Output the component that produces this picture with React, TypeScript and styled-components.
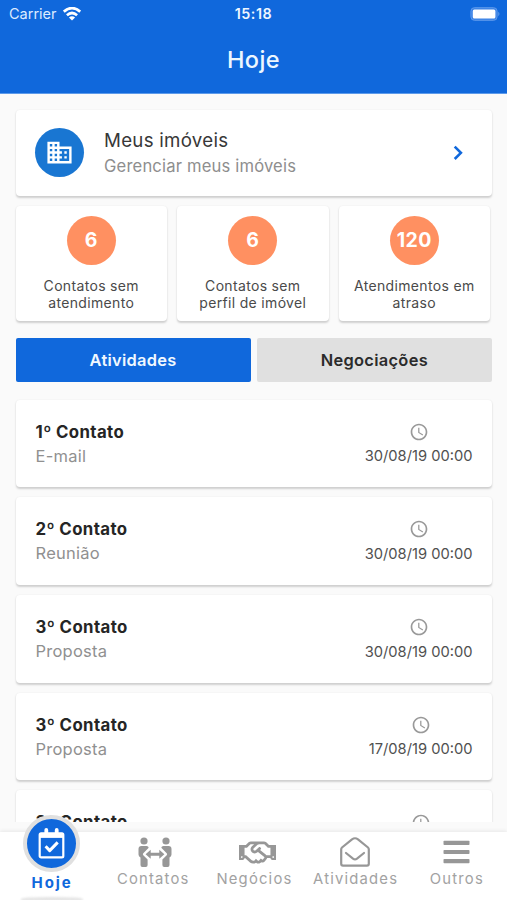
import React from "react";
import styled, { createGlobalStyle } from "styled-components";
import { MdDomain, MdAccessTime } from "react-icons/md";
import { FaRegHandshake } from "react-icons/fa";

const GlobalStyle = createGlobalStyle`
  * { box-sizing: border-box; }
  body { margin: 0; background: #fafafa; font-family: Inter, "Liberation Sans", sans-serif; }
`;

const Screen = styled.div`
  height: 900px;
  display: flex;
  flex-direction: column;
  overflow: hidden;
  background: #fafafa;
`;

const Header = styled.header`
  height: 94px;
  flex: none;
  background: #1068dc;
  border-bottom: 1px solid #5d9aea;
  color: #fff;
`;

const StatusBar = styled.div`
  height: 27px;
  padding: 0 7px 0 7px;
  display: grid;
  grid-template-columns: 1fr auto 1fr;
  align-items: center;
`;

const Carrier = styled.div`
  display: flex;
  align-items: center;
  gap: 6px;
  padding-left: 2px;
  font-size: 14.5px;
  letter-spacing: 0;
  color: #dcebff;
`;

const Clock = styled.div`
  font-size: 14.3px;
  font-weight: 600;
  letter-spacing: 0.55px;
  color: #eef6ff;
`;

const Battery = styled.svg`
  justify-self: end;
`;

const Title = styled.h1`
  margin: 0;
  height: 66px;
  line-height: 66px;
  text-align: center;
  font-size: 23.5px;
  font-weight: 500;
  letter-spacing: 0.45px;
  color: #edf7ff;
`;

const Content = styled.main`
  height: 728px;
  flex: none;
  overflow: hidden;
  padding: 15.5px 15px 0 15.5px;
`;

const Card = styled.section`
  background: #fff;
  border-radius: 4px;
  box-shadow: 0 1.5px 2px rgba(0, 0, 0, 0.17), 0 0 2px rgba(0, 0, 0, 0.04);
`;

const PropertyCard = styled(Card)`
  height: 86px;
  display: flex;
  align-items: center;
  padding: 0 28px 0 19.5px;
`;

const Disc = styled.div<{ $color: string }>`
  width: 49px;
  height: 49px;
  border-radius: 50%;
  display: flex;
  align-items: center;
  justify-content: center;
  background: ${(p) => p.$color};
  color: #fff;
  font-size: 19.5px;
  font-weight: 700;
  letter-spacing: 0.4px;
`;

const PropertyText = styled.div`
  flex: 1;
  margin-left: 20px;
  padding-top: 1px;
`;

const PropertyTitle = styled.div`
  font-size: 18.7px;
  line-height: 25px;
  letter-spacing: 0.27px;
  color: #383838;
`;

const PropertyHint = styled.div`
  padding-top: 1px;
  font-size: 16.6px;
  line-height: 24px;
  letter-spacing: 0.17px;
  color: #8e8e8e;
`;

const Stats = styled.div`
  display: grid;
  grid-template-columns: repeat(3, 151.5px);
  gap: 10px;
  margin-top: 10.5px;
`;

const StatCard = styled(Card)`
  height: 115px;
  padding-top: 9.5px;
  display: flex;
  flex-direction: column;
  align-items: center;
`;

const StatLabel = styled.div`
  margin-top: 12px;
  text-align: center;
  white-space: pre-line;
  font-size: 14px;
  line-height: 17px;
  letter-spacing: 0.33px;
  color: #4a4a4a;
`;

const Tabs = styled.div`
  display: grid;
  grid-template-columns: 1fr 1fr;
  gap: 6px;
  margin-top: 17px;
`;

const Tab = styled.button<{ $active?: boolean }>`
  height: 44px;
  padding: 0;
  border: 0;
  border-radius: 2px;
  background: ${(p) => (p.$active ? "#1068dc" : "#e0e0e0")};
  color: ${(p) => (p.$active ? "#f0f8ff" : "#2b2b2b")};
  font-family: inherit;
  font-size: 16.4px;
  font-weight: 600;
  letter-spacing: 0.3px;
`;

const ActivityList = styled.div`
  display: flex;
  flex-direction: column;
  gap: 10px;
  margin-top: 17.5px;
`;

const ActivityCard = styled(Card)`
  height: 87.7px;
  padding: 0 19.5px 0 20px;
  display: flex;
  justify-content: space-between;
`;

const ActivityInfo = styled.div`
  padding-top: 20.2px;
`;

const ActivityName = styled.div`
  font-size: 16.8px;
  line-height: 24px;
  font-weight: 700;
  letter-spacing: 0.4px;
  color: #252525;
`;

const ActivityKind = styled.div`
  font-size: 16.5px;
  line-height: 25px;
  letter-spacing: 0.25px;
  color: #909090;
`;

const ActivityDate = styled.div`
  padding-top: 22.3px;
  display: flex;
  flex-direction: column;
  align-items: center;
  gap: 5.5px;
  font-size: 14.7px;
  line-height: 18px;
  letter-spacing: 0;
  color: #505050;

  svg { color: #999; }
`;

const NavBar = styled.nav`
  position: relative;
  flex: none;
  height: 68px;
  margin-top: 10px;
  padding: 0 0 0 1px;
  display: grid;
  grid-template-columns: repeat(5, 101.2px);
  background: #fff;
  box-shadow: 0 -1px 4px rgba(0, 0, 0, 0.08);
`;

const NavItem = styled.a<{ $active?: boolean }>`
  display: flex;
  flex-direction: column;
  align-items: center;
  color: ${(p) => (p.$active ? "#1068dc" : "#a2a2a2")};
  font-size: ${(p) => (p.$active ? "15px" : "14.8px")};
  font-weight: ${(p) => (p.$active ? 700 : 400)};
  letter-spacing: ${(p) => (p.$active ? "1.9px" : "1.2px")};
`;

const NavIcon = styled.div<{ $shift?: number }>`
  height: 38px;
  padding-top: 2px;
  padding-left: ${(p) => p.$shift ?? 0}px;
  display: flex;
  align-items: center;
  color: #979797;
`;

const NavLabel = styled.span<{ $active?: boolean }>`
  line-height: 18px;
  margin-top: ${(p) => (p.$active ? "4px" : "0")};
  padding-left: 1px;
`;

/* Raised disc that overlaps the list above the bar. */
const ActiveDisc = styled.div`
  position: absolute;
  left: 23px;
  top: -17px;
  width: 57px;
  height: 57px;
  border: 4px solid #e0e0e0;
  border-radius: 50%;
  display: flex;
  align-items: center;
  justify-content: center;
  background: #1068dc;
  color: #fff;
`;

const ActiveGlow = styled.div`
  position: absolute;
  left: 21px;
  bottom: -1px;
  width: 62px;
  height: 4px;
  border-radius: 50% 50% 0 0;
  background: #e4e4e4;
  filter: blur(1px);
`;

const WifiGlyph = () => (
  <svg width="18" height="14" viewBox="0 0 18 14" fill="none" stroke="#fff" strokeWidth="2.7">
    <path d="M.8 4.6Q9-2.4 17.2 4.6" />
    <path d="M3.9 8.2Q9 3.8 14.1 8.2" />
    <path d="M9 13.5 5.9 10.6Q9 8 12.1 10.6Z" fill="#fff" stroke="none" />
  </svg>
);

const BatteryGlyph = () => (
  <Battery width="30" height="14" viewBox="0 0 30 14">
    <rect x="0.9" y="0.7" width="26.2" height="12.6" rx="3.5" fill="#3b82e6" stroke="#5f9aeb" strokeWidth="1" />
    <rect x="2.8" y="2.5" width="22.6" height="9" rx="1.6" fill="#fff" />
    <path d="M28.4 4.8q2 2.2 0 4.4z" fill="#6fa5ee" />
  </Battery>
);

const ChevronGlyph = () => (
  <svg width="11" height="16" viewBox="0 0 11 16" fill="none" stroke="#1068dc" strokeWidth="2.6">
    <path d="m1.7 1.6 6.2 6.2-6.2 6.2" />
  </svg>
);

const CalendarGlyph = () => (
  <svg width="27" height="31" viewBox="0 0 27 31" fill="none" stroke="currentColor">
    <rect x="1.7" y="5.4" width="23.6" height="24" rx="1.4" strokeWidth="2.2" />
    <path d="M2 7.4h23" strokeWidth="5" />
    <path d="M8.3 2v5M18.7 2v5" strokeWidth="3.8" strokeLinecap="round" />
    <path d="m7.6 18.3 4.1 4.3 8-8.2" strokeWidth="3" strokeLinejoin="round" />
  </svg>
);

const PeopleGlyph = () => (
  <svg width="34" height="31" viewBox="0 0 34 31" fill="currentColor">
    <circle cx="6" cy="4" r="3.6" />
    <circle cx="28" cy="4" r="3.6" />
    <path d="M3.4 9h5.2q1.8 0 2.1 1.8L5.3 16.3q-.9 1 0 2L9.6 22.6V28q0 2-1.8 2H4.3q-1.8 0-1.8-2v-7.5Q.5 19.6.5 17.5V12q0-3 2.9-3Z" />
    <path d="M30.6 9h-5.2q-1.8 0-2.1 1.8l5.4 5.5q.9 1 0 2L24.4 22.6V28q0 2 1.8 2h3.5q1.8 0 1.8-2v-7.5q2-.9 2-3V12q0-3-2.9-3Z" />
    <path d="m7.6 17.2 5.1-4.5v3h8.6v-3l5.1 4.5-5.1 4.6v-3.1h-8.6v3.1Z" />
  </svg>
);

const MenuGlyph = () => (
  <svg width="27" height="24" viewBox="0 0 27 24" fill="currentColor">
    <rect x="0.5" y="0.8" width="26" height="4.2" rx="0.8" />
    <rect x="0.5" y="9.9" width="26" height="4.2" rx="0.8" />
    <rect x="0.5" y="19" width="26" height="4.2" rx="0.8" />
  </svg>
);

const EnvelopeGlyph = () => (
  <svg width="30" height="30" viewBox="0 0 30 30" fill="none" stroke="currentColor" strokeWidth="2.2" strokeLinejoin="round" strokeLinecap="round">
    <path d="M1.2 12.2Q1.2 11.2 2 10.5L12 2.3Q15 .2 18 2.3L28 10.5Q28.8 11.2 28.8 12.2V26.8Q28.8 28.6 27 28.6H3Q1.2 28.6 1.2 26.8Z" />
    <path d="m6 16 7 5.7q2 1.5 4 0l7-5.7" />
  </svg>
);

const stats = [
  { value: "6", label: "Contatos sem\natendimento" },
  { value: "6", label: "Contatos sem\nperfil de imóvel" },
  { value: "120", label: "Atendimentos em\natraso" },
];

const activities = [
  { name: "1º Contato", kind: "E-mail", date: "30/08/19 00:00" },
  { name: "2º Contato", kind: "Reunião", date: "30/08/19 00:00" },
  { name: "3º Contato", kind: "Proposta", date: "30/08/19 00:00" },
  { name: "3º Contato", kind: "Proposta", date: "17/08/19 00:00" },
  { name: "3º Contato", kind: "Proposta", date: "17/08/19 00:00" },
];

const navItems = [
  { label: "Contatos", icon: <PeopleGlyph />, shift: 4 },
  { label: "Negócios", icon: <FaRegHandshake size={37} />, shift: 7 },
  { label: "Atividades", icon: <EnvelopeGlyph />, shift: 0 },
  { label: "Outros", icon: <MenuGlyph />, shift: 0 },
];

export default function App() {
  return (
    <Screen>
      <GlobalStyle />
      <Header>
        <StatusBar>
          <Carrier>
            Carrier
            <WifiGlyph />
          </Carrier>
          <Clock>15:18</Clock>
          <BatteryGlyph />
        </StatusBar>
        <Title>Hoje</Title>
      </Header>
      <Content>
        <PropertyCard>
          <Disc $color="#1976d2">
            <MdDomain size={29} />
          </Disc>
          <PropertyText>
            <PropertyTitle>Meus imóveis</PropertyTitle>
            <PropertyHint>Gerenciar meus imóveis</PropertyHint>
          </PropertyText>
          <ChevronGlyph />
        </PropertyCard>
        <Stats>
          {stats.map((s) => (
            <StatCard key={s.label}>
              <Disc $color="#ff9061">{s.value}</Disc>
              <StatLabel>{s.label}</StatLabel>
            </StatCard>
          ))}
        </Stats>
        <Tabs>
          <Tab $active>Atividades</Tab>
          <Tab>Negociações</Tab>
        </Tabs>
        <ActivityList>
          {activities.map((a, i) => (
            <ActivityCard key={i}>
              <ActivityInfo>
                <ActivityName>{a.name}</ActivityName>
                <ActivityKind>{a.kind}</ActivityKind>
              </ActivityInfo>
              <ActivityDate>
                <MdAccessTime size={20} />
                {a.date}
              </ActivityDate>
            </ActivityCard>
          ))}
        </ActivityList>
      </Content>
      <NavBar>
        <NavItem $active>
          <NavIcon />
          <NavLabel $active>Hoje</NavLabel>
        </NavItem>
        {navItems.map((n) => (
          <NavItem key={n.label}>
            <NavIcon $shift={n.shift}>{n.icon}</NavIcon>
            <NavLabel>{n.label}</NavLabel>
          </NavItem>
        ))}
        <ActiveDisc>
          <CalendarGlyph />
        </ActiveDisc>
        <ActiveGlow />
      </NavBar>
    </Screen>
  );
}
